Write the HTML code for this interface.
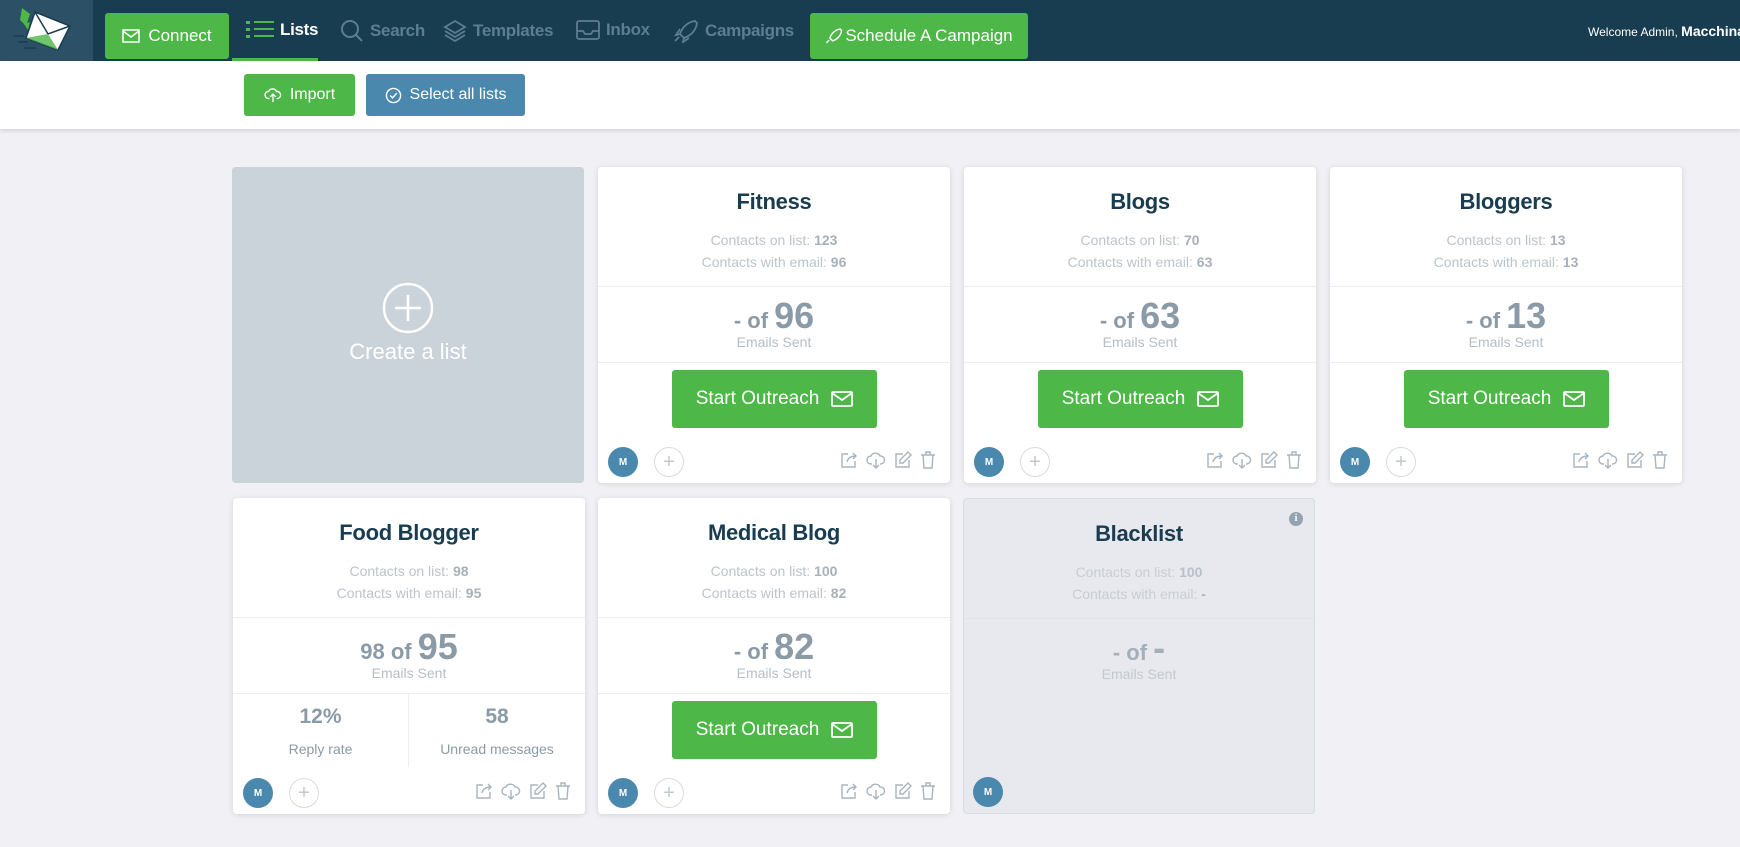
<!DOCTYPE html>
<html><head><meta charset="utf-8"><style>
*{box-sizing:border-box;margin:0;padding:0}
body{width:1740px;height:847px;overflow:hidden;background:#f0f0f5;font-family:"Liberation Sans",sans-serif;position:relative}
.hdr{position:absolute;left:0;top:0;width:1740px;height:61px;background:#183c50}
.logo{position:absolute;left:0;top:0;width:93px;height:61px;background:#2c5066}
.btn{position:absolute;color:#fff;border-radius:3px;display:flex;align-items:center;justify-content:center;font-size:17px}
.g{background:#4db748}
.nav{position:absolute;top:19px;font-size:17px;color:#5d7d92;font-weight:bold;display:flex;align-items:center;gap:6px;letter-spacing:-0.3px}
.tb{position:absolute;left:0;top:61px;width:1740px;height:68px;background:#fff;box-shadow:0 2px 4px rgba(0,0,0,.12)}
.card{position:absolute;width:352px;height:316px;background:#fff;border-radius:4px;box-shadow:0 1px 6px rgba(0,0,0,.12)}
.t{position:absolute;left:0;right:0;top:22px;text-align:center;font-size:22px;font-weight:bold;color:#183c50;letter-spacing:-0.3px}
.c{position:absolute;left:0;right:0;text-align:center;font-size:14px;color:#bcc4cb}
.c b{color:#a7b1ba}
.hr{position:absolute;left:0;right:0;height:1px;background:#eceef1}
.big{position:absolute;left:0;right:0;top:128px;text-align:center;color:#8a9aa7;font-weight:bold;font-size:22px}
.big span{font-size:36px}
.es{position:absolute;left:0;right:0;top:167px;text-align:center;font-size:14px;color:#b5bec6}
.so{position:absolute;left:74px;top:203px;width:205px;height:58px;background:#4db748;border-radius:3px;color:#fff;font-size:19px;display:flex;align-items:center;justify-content:center;gap:12px}
.av{position:absolute;left:10px;top:280px;width:30px;height:30px;border-radius:50%;background:#4a88ad;color:#fff;font-size:10px;font-weight:bold;display:flex;align-items:center;justify-content:center}
.pl{position:absolute;left:56px;top:280px;width:30px;height:30px;border-radius:50%;border:1px solid #d7dce0;color:#c0c7cd;font-size:20px;display:flex;align-items:center;justify-content:center}
.ic{position:absolute;right:14px;top:284px;display:flex;gap:8px}
</style></head><body>
<div class="hdr"></div>
<div class="logo"><svg width="93" height="61" viewBox="0 0 93 61"><path d="M22 8 L30 14 L26 26 L20 20Z" fill="#4db748"/><path d="M24 24 L30 22 L28 30Z" fill="#4db748"/><path d="M35 12 L70 26 L58 50 L26 38Z" fill="#fff" stroke="#183c50" stroke-width="1.5"/><path d="M35 12 L48 34 L70 26" fill="none" stroke="#183c50" stroke-width="1.5"/><path d="M58 50 L48 34 L26 38" fill="#4db748" opacity=".8"/><path d="M14 36h10M18 42h10M24 48h12" stroke="#183c50" stroke-width="1.5"/></svg></div>
<div class="btn g" style="left:105px;top:13px;width:124px;height:46px"><svg width="18" height="14" viewBox="0 0 18 14" style="margin-right:8px"><rect x="1" y="1" width="16" height="12" fill="none" stroke="#fff" stroke-width="1.5"/><path d="M1 2l8 6 8-6" fill="none" stroke="#fff" stroke-width="1.5"/></svg>Connect</div>
<div class="nav" style="left:246px;color:#fff"><svg width="28" height="22" viewBox="0 0 28 22"><g fill="#4db748"><rect x="0" y="2" width="4" height="3"/><rect x="0" y="9" width="4" height="3"/><rect x="0" y="16" width="4" height="3"/><rect x="8" y="2" width="20" height="2"/><rect x="8" y="9" width="20" height="2"/><rect x="8" y="16" width="20" height="2"/></g></svg>Lists</div>
<div style="position:absolute;left:232px;top:58px;width:86px;height:3px;background:#4db748"></div>
<div class="nav" style="left:340px"><svg width="24" height="24" viewBox="0 0 24 24"><circle cx="10" cy="10" r="8" fill="none" stroke="#5d7d92" stroke-width="2"/><path d="M16 16l6 6" stroke="#5d7d92" stroke-width="2"/></svg>Search</div>
<div class="nav" style="left:443px"><svg width="24" height="24" viewBox="0 0 24 24" fill="none" stroke="#5d7d92" stroke-width="1.8"><path d="M12 2l10 6-10 6-10-6z"/><path d="M2 12l10 6 10-6"/><path d="M2 16l10 6 10-6"/></svg>Templates</div>
<div class="nav" style="left:576px"><svg width="24" height="22" viewBox="0 0 24 22" fill="none" stroke="#5d7d92" stroke-width="1.8"><rect x="1" y="2" width="22" height="18" rx="2"/><path d="M1 12h6l2 3h6l2-3h6"/></svg>Inbox</div>
<div class="nav" style="left:673px"><svg width="26" height="24" viewBox="0 0 26 24" fill="none" stroke="#5d7d92" stroke-width="1.8"><path d="M22 2C14 3 9 9 7 15l4 4c6-2 12-7 13-15z"/><path d="M7 15l-4 1 4-6M11 19l-1 4 6-4M6 18l-4 4"/></svg>Campaigns</div>
<div class="btn g" style="left:810px;top:13px;width:218px;height:46px"><svg width="18" height="18" viewBox="0 0 26 24" fill="none" stroke="#fff" stroke-width="2" style="margin-right:2px"><path d="M22 2C14 3 9 9 7 15l4 4c6-2 12-7 13-15z"/><path d="M6 18l-4 4"/></svg>Schedule A Campaign</div>
<div style="position:absolute;left:1588px;top:23px;color:#fff;font-size:12px;white-space:nowrap">Welcome Admin, <span style="font-size:14px;font-weight:bold">Macchina</span></div>
<div class="tb"></div>
<div class="btn g" style="left:244px;top:74px;width:111px;height:42px;font-size:16px"><svg width="18" height="16" viewBox="0 0 20 18" fill="none" stroke="#fff" stroke-width="1.5" style="margin-right:8px"><path d="M6 13H5a4 4 0 010-8 5 5 0 019 0 4 4 0 011 8h-1"/><path d="M10 8v9M7 11l3-3 3 3"/></svg>Import</div>
<div class="btn" style="left:366px;top:74px;width:159px;height:42px;background:#4a88ad;font-size:16px"><svg width="17" height="17" viewBox="0 0 18 18" fill="none" stroke="#fff" stroke-width="1.5" style="margin-right:8px"><circle cx="9" cy="9" r="7.5"/><path d="M5.5 9l2.5 2.5 4.5-5"/></svg>Select all lists</div>

<div class="card" style="left:232px;top:167px;background:#cbd3da;box-shadow:none">
<svg style="position:absolute;left:150px;top:115px" width="52" height="52" viewBox="0 0 52 52" fill="none" stroke="#fff" stroke-width="2.5"><circle cx="26" cy="26" r="24"/><path d="M26 13v26M13 26h26"/></svg>
<div style="position:absolute;left:0;right:0;top:172px;text-align:center;color:#fff;font-size:22px">Create a list</div></div>

<div class="card" style="left:598px;top:167px"><div class="t">Fitness</div><div class="c" style="top:65px">Contacts on list: <b>123</b></div><div class="c" style="top:87px">Contacts with email: <b>96</b></div><div class="hr" style="top:119px"></div><div class="big">- of <span>96</span></div><div class="es">Emails Sent</div><div class="hr" style="top:195px"></div><div class="so">Start Outreach <svg width="22" height="16" viewBox="0 0 22 16" fill="none" stroke="#fff" stroke-width="1.8"><rect x="1" y="1" width="20" height="14" rx="1"/><path d="M1 2l10 7 10-7"/></svg></div><div class="av">M</div><div class="pl">+</div><div class="ic">ICONS</div></div>
<div class="card" style="left:964px;top:167px"><div class="t">Blogs</div><div class="c" style="top:65px">Contacts on list: <b>70</b></div><div class="c" style="top:87px">Contacts with email: <b>63</b></div><div class="hr" style="top:119px"></div><div class="big">- of <span>63</span></div><div class="es">Emails Sent</div><div class="hr" style="top:195px"></div><div class="so">Start Outreach <svg width="22" height="16" viewBox="0 0 22 16" fill="none" stroke="#fff" stroke-width="1.8"><rect x="1" y="1" width="20" height="14" rx="1"/><path d="M1 2l10 7 10-7"/></svg></div><div class="av">M</div><div class="pl">+</div><div class="ic">ICONS</div></div>
<div class="card" style="left:1330px;top:167px"><div class="t">Bloggers</div><div class="c" style="top:65px">Contacts on list: <b>13</b></div><div class="c" style="top:87px">Contacts with email: <b>13</b></div><div class="hr" style="top:119px"></div><div class="big">- of <span>13</span></div><div class="es">Emails Sent</div><div class="hr" style="top:195px"></div><div class="so">Start Outreach <svg width="22" height="16" viewBox="0 0 22 16" fill="none" stroke="#fff" stroke-width="1.8"><rect x="1" y="1" width="20" height="14" rx="1"/><path d="M1 2l10 7 10-7"/></svg></div><div class="av">M</div><div class="pl">+</div><div class="ic">ICONS</div></div>

<div class="card" style="left:233px;top:498px"><div class="t">Food Blogger</div><div class="c" style="top:65px">Contacts on list: <b>98</b></div><div class="c" style="top:87px">Contacts with email: <b>95</b></div><div class="hr" style="top:119px"></div><div class="big">98 of <span>95</span></div><div class="es">Emails Sent</div><div class="hr" style="top:195px"></div>
<div style="position:absolute;left:175px;top:195px;width:1px;height:74px;background:#eceef1"></div>
<div style="position:absolute;left:0;width:175px;top:207px;text-align:center;color:#8a9aa7;font-weight:bold;font-size:21px">12%</div>
<div style="position:absolute;left:0;width:175px;top:243px;text-align:center;color:#8a9aa7;font-size:14px">Reply rate</div>
<div style="position:absolute;left:176px;width:176px;top:207px;text-align:center;color:#8a9aa7;font-weight:bold;font-size:21px">58</div>
<div style="position:absolute;left:176px;width:176px;top:243px;text-align:center;color:#8a9aa7;font-size:14px">Unread messages</div>
<div class="av">M</div><div class="pl">+</div><div class="ic">ICONS</div></div>
<div class="card" style="left:598px;top:498px"><div class="t">Medical Blog</div><div class="c" style="top:65px">Contacts on list: <b>100</b></div><div class="c" style="top:87px">Contacts with email: <b>82</b></div><div class="hr" style="top:119px"></div><div class="big">- of <span>82</span></div><div class="es">Emails Sent</div><div class="hr" style="top:195px"></div><div class="so">Start Outreach <svg width="22" height="16" viewBox="0 0 22 16" fill="none" stroke="#fff" stroke-width="1.8"><rect x="1" y="1" width="20" height="14" rx="1"/><path d="M1 2l10 7 10-7"/></svg></div><div class="av">M</div><div class="pl">+</div><div class="ic">ICONS</div></div>
<div class="card" style="left:963px;top:498px;background:#e8e9ee;border:1px solid #d8dbe0;box-shadow:none"><div class="t">Blacklist</div>
<div style="position:absolute;right:11px;top:13px;width:14px;height:14px;border-radius:50%;background:#94a3af;color:#fff;font-size:10px;font-weight:bold;text-align:center;line-height:14px;font-family:'Liberation Serif',serif">i</div>
<div class="c" style="top:65px;color:#c7cdd3">Contacts on list: <b style="color:#b8c1c8">100</b></div><div class="c" style="top:87px;color:#c7cdd3">Contacts with email: <b>-</b></div><div class="hr" style="top:119px;background:#e0e2e7"></div><div class="big" style="color:#a3b0bb">- of <span>-</span></div><div class="es" style="color:#c2c9cf">Emails Sent</div><div class="av" style="left:9px;top:278px">M</div></div>

<script>
var ic='<svg width="18" height="18" viewBox="0 0 18 18" fill="none" stroke="#a9b4bd" stroke-width="1.4"><path d="M8 3H2v13h13v-6"/><path d="M7 11c1-4 4-6 9-6M13 2l3 3-3 3"/></svg><svg width="20" height="18" viewBox="0 0 20 18" fill="none" stroke="#a9b4bd" stroke-width="1.4"><path d="M6 13H5a4 4 0 010-8 5 5 0 019 0 4 4 0 011 8h-1"/><path d="M10 8v9M7 14l3 3 3-3"/></svg><svg width="18" height="18" viewBox="0 0 18 18" fill="none" stroke="#a9b4bd" stroke-width="1.4"><path d="M9 3H2v13h13V9"/><path d="M14 1l3 3-8 8H6V9z"/></svg><svg width="16" height="18" viewBox="0 0 16 18" fill="none" stroke="#a9b4bd" stroke-width="1.4"><path d="M1 4h14M6 4V1h4v3M3 4l1 13h8l1-13"/></svg>';
document.querySelectorAll('.ic').forEach(function(e){e.innerHTML=ic});
</script>
</body></html>
